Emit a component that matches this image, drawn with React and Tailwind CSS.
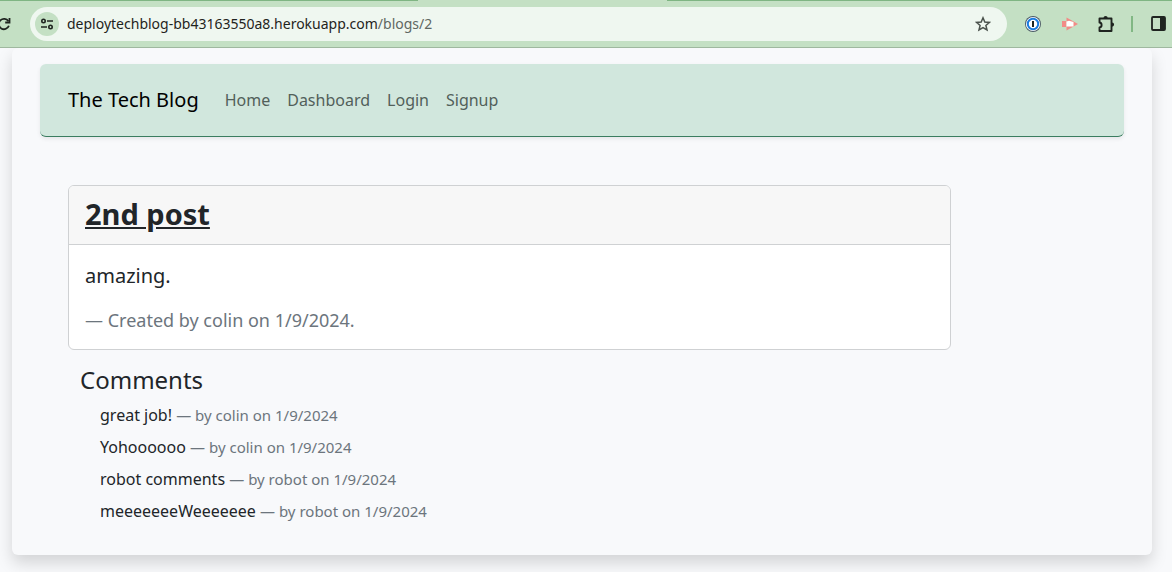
import React from "react";

const comments = [
  { text: "great job!", meta: "— by colin on 1/9/2024" },
  { text: "Yohoooooo", meta: "— by colin on 1/9/2024" },
  { text: "robot comments", meta: "— by robot on 1/9/2024" },
  { text: "meeeeeeeWeeeeeee", meta: "— by robot on 1/9/2024" },
];

const links = ["Home", "Dashboard", "Login", "Signup"];

function Toolbar() {
  return (
    <header className="relative flex h-12 shrink-0 items-center border-b border-[#9fb89f] bg-[#c4e0c4]">
      <div className="absolute inset-x-0 top-0 flex h-px">
        <span className="w-[418px] bg-[#7fb583]" />
        <span className="w-[249px]" />
        <span className="flex-1 bg-[#7fb583]" />
      </div>
      <button aria-label="Reload" className="w-[30px] shrink-0">
        <svg width="12" height="16" viewBox="0 0 12 16" fill="none" stroke="#1f2420" strokeWidth="1.8">
          <path d="M8.900 9.800A5.200 5.200 0 1 1 8.400 5.200" />
          <path d="M9.500 2v4.500H5.200" />
        </svg>
      </button>
      <div className="flex h-[34px] min-w-0 flex-1 items-center rounded-full bg-[#eff7f0] pl-[5px] pr-4">
        <button aria-label="Site information" className="grid size-6 shrink-0 place-items-center rounded-full bg-[#c4e0c4]">
          <svg width="14" height="12" viewBox="0 0 14 12" fill="none" stroke="#1f2420" strokeWidth="1.6">
            <circle cx="3.5" cy="3" r="1.7" />
            <path d="M7 3h6M1 9h6" />
            <circle cx="10.5" cy="9" r="1.7" />
          </svg>
        </button>
        <span className="ml-2 min-w-0 flex-1 truncate font-['Noto_Sans','Open_Sans',sans-serif] text-[14px] text-[#1f2420]">
          deploytechblog-bb43163550a8.herokuapp.com<span className="text-[#5f6762]">/blogs/2</span>
        </span>
        <button aria-label="Bookmark this page">
          <svg width="16" height="16" viewBox="0 0 16 16" fill="none" stroke="#4b524d" strokeWidth="1.5">
            <path d="M8 1.800l1.800 4.200 4.600.4-3.500 3 1.100 4.500L8 11.500 4 13.900l1.100-4.500-3.500-3 4.600-.4z" />
          </svg>
        </button>
      </div>
      <div className="ml-[18px] flex shrink-0 items-center">
        <button aria-label="Password manager">
          <svg width="16" height="16" viewBox="0 0 16 16">
            <circle cx="8" cy="8" r="8" fill="#4b5a66" />
            <circle cx="8" cy="8" r="7.100" fill="#fff" />
            <circle cx="8" cy="8" r="5.200" fill="#fff" stroke="#1a7be0" strokeWidth="2" />
            <path d="M7 5h2v6H7z" fill="#1f2420" />
          </svg>
        </button>
        <button aria-label="Extension" className="ml-5">
          <svg width="18" height="16" viewBox="0 0 18 16">
            <path d="M1 5h4v6H1z" fill="#f28b86" />
            <path d="M5.500 1.500L17 8 5.500 14.500z" fill="#f28b86" />
            <path d="M5.500 5.500l2.500-.8L12.500 6v4.500h-7z" fill="#fff" />
          </svg>
        </button>
        <button aria-label="Extensions" className="ml-[18px]">
          <svg width="18" height="18" viewBox="0 0 18 18">
            <path d="M3 3.500h11.500V16H2.500v-3.500c2.800-.3 2.800-4.700 0-5v-4z" fill="none" stroke="#1f2420" strokeWidth="1.900" strokeLinejoin="round" />
            <path d="M6.500 3a2.100 2.100 0 0 1 4.200 0zM15 7.500a2.100 2.100 0 0 1 0 4.200z" fill="#1f2420" />
          </svg>
        </button>
        <span className="ml-4 h-4 w-[2px] bg-[#81b784]" />
        <button aria-label="Side panel" className="ml-[18px] mr-[6px]">
          <svg width="15" height="15" viewBox="0 0 15 15">
            <rect x="1" y="1" width="13" height="13" rx="1" fill="none" stroke="#1f2420" strokeWidth="1.800" />
            <path d="M9 1h5v13H9z" fill="#1f2420" />
          </svg>
        </button>
      </div>
    </header>
  );
}

export default function App() {
  return (
    <div className="flex min-h-screen flex-col bg-[#f8f9fb] font-['Noto_Sans','Open_Sans',sans-serif] text-[#212529]">
      <Toolbar />
      <div className="grow overflow-hidden pb-4">
        <div className="ml-3 mr-5 rounded-md bg-[#f8f9fb] px-7 pb-7 pt-4 shadow-[0_8px_16px_rgba(0,0,0,0.15)]">
          <nav className="flex h-[73px] items-center rounded-md border-b border-[#3b7d60] bg-[#d1e7dd] px-7 shadow-[0_2px_4px_rgba(0,0,0,0.075)]">
            <a href="#" className="text-[20px] text-black">The Tech Blog</a>
            <div className="ml-[26px] flex gap-[17px] text-[16px] text-[#52605a]">
              {links.map((l) => (
                <a key={l} href="#">{l}</a>
              ))}
            </div>
          </nav>
          <main className="-mr-1 pl-7 pt-12">
            <article className="w-10/12 overflow-hidden rounded-md border border-[#cfd1d3] bg-white">
              <h1 className="border-b border-[#cfd1d3] bg-[#f7f7f7] px-4 pb-[10px] pt-2 text-[29px] font-bold leading-[40px] underline">2nd post</h1>
              <div className="p-4">
                <p className="text-[20px] leading-[30px]">amazing.</p>
                <p className="mt-4 text-[18px] leading-[26px] text-[#6c757d]">— Created by colin on 1/9/2024.</p>
              </div>
            </article>
            <section className="px-3 pt-4">
              <h2 className="text-[24px] leading-7">Comments</h2>
              <ul className="px-5 pt-[5px]">
                {comments.map((c) => (
                  <li key={c.text} className="text-[16px] leading-8">
                    {c.text} <span className="text-[15px] leading-none text-[#6c757d]">{c.meta}</span>
                  </li>
                ))}
              </ul>
            </section>
          </main>
        </div>
      </div>
    </div>
  );
}
